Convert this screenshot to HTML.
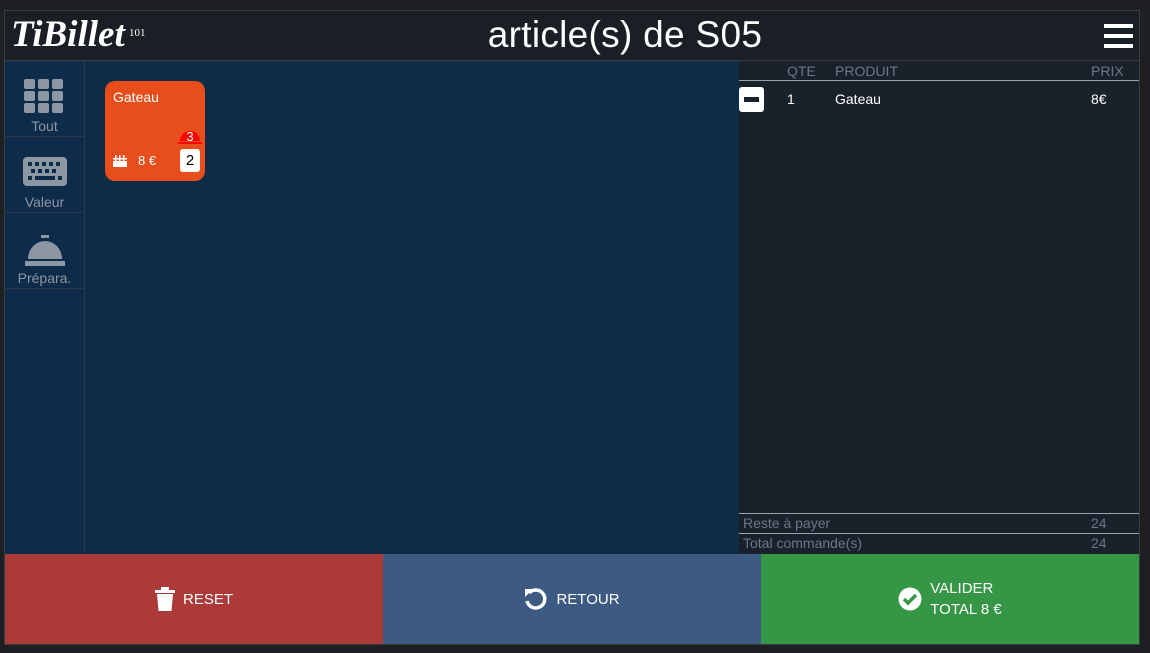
<!DOCTYPE html>
<html><head><meta charset="utf-8"><style>
*{margin:0;padding:0;box-sizing:border-box}
body{width:1150px;height:653px;background:#1e1f22;font-family:"Liberation Sans",sans-serif;position:relative;overflow:hidden}
.app{position:absolute;left:4px;top:10px;width:1136px;height:635px;background:#0f2c47;border:1px solid #3a3d42}
.hdr{position:absolute;left:0;top:0;width:1134px;height:50px;background:#1a1e25;border-bottom:1px solid #3a3d42}
.logo{position:absolute;left:6px;top:2px;font-family:"Liberation Serif",serif;font-style:italic;font-weight:bold;font-size:37px;color:#fff}
.sup{font-size:11px;position:absolute;left:124px;top:16px;color:#fff;font-family:"Liberation Serif",serif}
.title{position:absolute;left:480px;width:280px;top:3px;text-align:center;color:#fff;font-size:37px;letter-spacing:0.3px}
.burger{position:absolute;right:6px;top:13px;width:29px}
.burger div{height:4px;background:#fff;margin-bottom:6px}
.side{position:absolute;left:0;top:50px;width:80px;height:493px;background:#0e2b49;border-right:1px solid #2a3a4c}
.si{height:76px;border-bottom:1px solid #2a3a4c;text-align:center;color:#8d97a4;font-size:14px;position:relative}
.si span{position:absolute;left:0;right:0;bottom:2px}
.card{position:absolute;left:100px;top:70px;width:100px;height:100px;background:#e84e1b;border-radius:10px;color:#fff}
.right{position:absolute;left:734px;top:50px;width:400px;height:493px;background:#19212b}
.btn{position:absolute;top:543px;height:90px;color:#fff;font-size:15px;display:flex;align-items:center;justify-content:center;gap:8px}
</style></head><body>
<div class="app">
<div class="hdr"><div class="logo">TiBillet</div><div class="sup">101</div><div class="title">article(s) de S05</div>
<div class="burger"><div></div><div></div><div></div></div></div>
<div class="side">
<div class="si"><svg style="position:absolute;left:19px;top:18px" width="40" height="35"><g fill="#8d97a4"><rect x="0" y="0" width="11" height="10" rx="2"/><rect x="14" y="0" width="11" height="10" rx="2"/><rect x="28" y="0" width="11" height="10" rx="2"/><rect x="0" y="12" width="11" height="10" rx="2"/><rect x="14" y="12" width="11" height="10" rx="2"/><rect x="28" y="12" width="11" height="10" rx="2"/><rect x="0" y="24" width="11" height="10" rx="2"/><rect x="14" y="24" width="11" height="10" rx="2"/><rect x="28" y="24" width="11" height="10" rx="2"/></g></svg><span>Tout</span></div>
<div class="si"><svg style="position:absolute;left:18px;top:20px" width="44" height="30"><rect width="44" height="29" rx="4" fill="#8d97a4"/><g fill="#0e2b49"><rect x="5" y="5" width="4" height="4"/><rect x="12" y="5" width="4" height="4"/><rect x="19" y="5" width="4" height="4"/><rect x="26" y="5" width="4" height="4"/><rect x="33" y="5" width="4" height="4"/><rect x="8" y="12" width="4" height="4"/><rect x="15" y="12" width="4" height="4"/><rect x="22" y="12" width="4" height="4"/><rect x="29" y="12" width="4" height="4"/><rect x="5" y="19" width="4" height="4"/><rect x="12" y="19" width="20" height="4"/><rect x="35" y="19" width="4" height="4"/></g></svg><span>Valeur</span></div>
<div class="si"><svg style="position:absolute;left:20px;top:22px" width="40" height="32"><rect x="16" y="0" width="8" height="3" fill="#8d97a4"/><path d="M3 24 A17 18 0 0 1 37 24Z" fill="#8d97a4"/><rect x="0" y="26" width="40" height="5" fill="#8d97a4"/></svg><span>Prépara.</span></div>
</div>
<div class="card"><div style="position:absolute;left:8px;top:8px;font-size:14px">Gateau</div>
<svg style="position:absolute;left:73px;top:48px" width="24" height="16"><path d="M2 12 A10 10 0 0 1 22 12Z" fill="#f00"/><rect x="0" y="13" width="24" height="2" fill="#f00"/><text x="12" y="12" fill="#fff" font-size="13" text-anchor="middle" font-family="Liberation Sans">3</text></svg>
<svg style="position:absolute;left:8px;top:72px" width="14" height="14"><g fill="#fff"><rect x="0" y="8" width="14" height="6"/><rect x="2" y="2" width="1.5" height="6"/><rect x="6" y="2" width="1.5" height="6"/><rect x="10" y="2" width="1.5" height="6"/><rect x="0" y="5" width="14" height="1.5"/></g></svg>
<div style="position:absolute;left:33px;top:72px;font-size:13px">8 €</div>
<div style="position:absolute;left:75px;top:68px;width:20px;height:23px;background:#fff;border-radius:3px;color:#000;font-size:15px;text-align:center;line-height:23px">2</div></div>
<div class="right">
<div style="position:absolute;left:0;top:0;width:400px;height:20px;border-bottom:1px solid #9aa3ad;color:#6c7784;font-size:14px">
<span style="position:absolute;left:48px;top:2px">QTE</span><span style="position:absolute;left:96px;top:2px">PRODUIT</span><span style="position:absolute;left:352px;top:2px">PRIX</span></div>
<div style="position:absolute;left:0;top:26px;width:25px;height:25px;background:#fff;border-radius:3px"><div style="position:absolute;left:5px;top:10px;width:15px;height:5px;background:#1a222c"></div></div>
<div style="position:absolute;top:30px;color:#fff;font-size:14px;width:400px"><span style="position:absolute;left:48px">1</span><span style="position:absolute;left:96px">Gateau</span><span style="position:absolute;left:352px">8€</span></div>
<div style="position:absolute;left:0;top:452px;width:400px;height:20px;border-top:1px solid #9aa3ad;color:#6c7784;font-size:14px"><span style="position:absolute;left:4px;top:1px">Reste à payer</span><span style="position:absolute;left:352px;top:1px">24</span></div>
<div style="position:absolute;left:0;top:472px;width:400px;height:21px;border-top:1px solid #9aa3ad;color:#6c7784;font-size:14px"><span style="position:absolute;left:4px;top:1px">Total commande(s)</span><span style="position:absolute;left:352px;top:1px">24</span></div>
</div>
<div class="btn" style="left:0;width:378px;background:#ab3a39"><svg width="20" height="24"><rect x="0" y="3" width="20" height="3" fill="#fff"/><rect x="6" y="0" width="8" height="3" fill="#fff"/><path d="M2 7h16l-1.5 17h-13z" fill="#fff"/></svg>RESET</div>
<div class="btn" style="left:378px;width:378px;background:#3d5a82"><svg width="24" height="24"><path d="M5 6 A9 9 0 1 1 3 14" stroke="#fff" stroke-width="3.5" fill="none"/><path d="M1 2 L9 2 L1 10Z" fill="#fff"/></svg>RETOUR</div>
<div class="btn" style="left:756px;width:378px;background:#359646"><svg width="24" height="24"><circle cx="12" cy="12" r="11.5" fill="#fff"/><path d="M6 12l4 4 8-8" stroke="#359646" stroke-width="3.5" fill="none"/></svg><div style="line-height:21px">VALIDER<br>TOTAL 8 €</div></div>
</div>
</body></html>
